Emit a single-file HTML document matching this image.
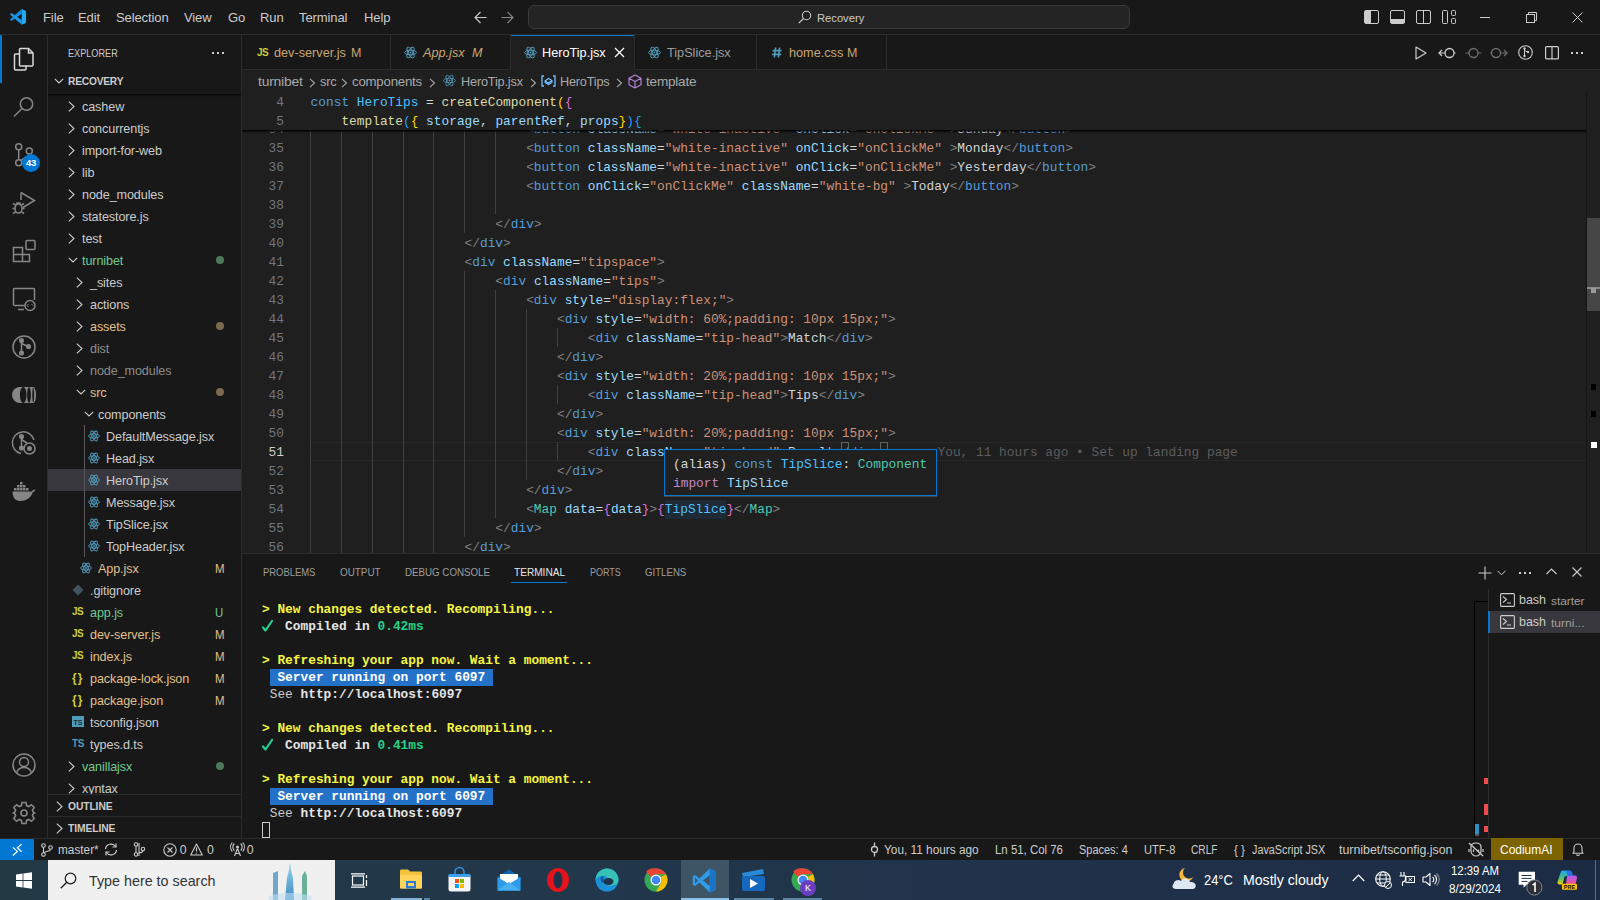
<!DOCTYPE html>
<html><head><meta charset="utf-8">
<style>
*{box-sizing:border-box}
html,body{margin:0;padding:0}
body{width:1600px;height:900px;overflow:hidden;position:relative;background:#181818;font-family:"Liberation Sans",sans-serif;color:#cccccc}
.a{position:absolute}
.mono{font-family:"Liberation Mono",monospace}
svg{position:absolute;overflow:visible}
/* title */
#title{left:0;top:0;width:1600px;height:35px;background:#181818;border-bottom:1px solid #2b2b2b}
.menu{top:10px;font-size:13px;color:#cccccc;letter-spacing:-0.1px}
/* activity */
#act{left:0;top:35px;width:48px;height:803px;background:#181818;border-right:1px solid #2b2b2b}
/* sidebar */
#side{left:48px;top:35px;width:194px;height:803px;background:#181818;border-right:1px solid #2b2b2b}
.row{position:absolute;left:0;width:193px;height:22px;font-size:13.2px;line-height:22px;white-space:nowrap;letter-spacing:-0.1px;transform:scaleX(0.955);transform-origin:0 0;margin-top:0.6px}
/* tabs */
#tabs{left:242px;top:35px;width:1358px;height:35px;background:#181818;border-bottom:1px solid #2b2b2b}
.tab{position:absolute;top:1px;height:35px;border-right:1px solid #2b2b2b;font-size:13px;line-height:35px;white-space:nowrap;letter-spacing:-0.2px}
/* breadcrumbs */
#bc{left:242px;top:70px;width:1358px;height:22px;background:#1f1f1f;font-size:13px;line-height:22px;color:#a9a9a9;white-space:nowrap;letter-spacing:-0.2px}
/* editor */
#ed{left:242px;top:92px;width:1358px;height:461px;background:#1f1f1f;overflow:hidden}
.ln{position:absolute;left:0;margin-top:1px;width:42px;text-align:right;font-family:"Liberation Mono",monospace;font-size:12.83px;line-height:19px;height:19px;color:#6e7681}
.cl{position:absolute;left:68.6px;margin-top:1px;font-family:"Liberation Mono",monospace;font-size:12.83px;line-height:19px;height:19px;white-space:pre;color:#cccccc}
/* panel */
#panel{left:242px;top:553px;width:1358px;height:285px;background:#181818;border-top:1px solid #2b2b2b}
/* status */
#status{left:0;top:838px;width:1600px;height:22px;background:#181818;border-top:1px solid #2b2b2b;font-size:12px;line-height:21px;color:#cccccc;white-space:nowrap}
/* taskbar */
#task{left:0;top:860px;width:1600px;height:40px;background:#1d3140}
/* syntax */
.k{color:#569cd6}.v{color:#4fc1ff}.f{color:#dcdcaa}.p{color:#9cdcfe}.g{color:#808080}.t{color:#569cd6}.at{color:#9cdcfe}.s{color:#ce9178}.c{color:#4ec9b0}.w{color:#d4d4d4}
.b1{color:#ffd700}.b2{color:#da70d6}.b3{color:#179fff}
.hl{background:#1e2a36;display:inline-block;height:19px;vertical-align:top}
</style></head>
<body>
<div id="title" class="a">
<svg style="left:6px;top:5px" width="24" height="24" viewBox="0 0 24 24"><path d="M15.7 4L15.7 8.8L5.6 16L4 14.5Z" fill="#1790e0"/><path d="M5.6 7.9L15.7 15L15.7 19.7L4 9.4Z" fill="#1a98e8"/><path d="M15.7 4L20 6V18L15.7 19.7Z" fill="#25a8f4"/></svg>
<div class="a menu" style="left:43px">File</div>
<div class="a menu" style="left:78px">Edit</div>
<div class="a menu" style="left:116px">Selection</div>
<div class="a menu" style="left:184px">View</div>
<div class="a menu" style="left:228px">Go</div>
<div class="a menu" style="left:260px">Run</div>
<div class="a menu" style="left:299px">Terminal</div>
<div class="a menu" style="left:364px">Help</div>
<svg style="left:474px;top:11px" width="13" height="13" viewBox="0 0 13 13"><path d="M12.5 6.5H1M6.5 1L1 6.5L6.5 12" stroke="#cccccc" stroke-width="1.1" fill="none"/></svg>
<svg style="left:501px;top:11px" width="13" height="13" viewBox="0 0 13 13"><path d="M0.5 6.5H12M6.5 1L12 6.5L6.5 12" stroke="#8a8a8a" stroke-width="1.1" fill="none"/></svg>
<div class="a" style="left:528px;top:5px;width:602px;height:24px;background:#242424;border:1px solid #3a3a3a;border-radius:6px"></div>
<svg style="left:798px;top:10px" width="14" height="14" viewBox="0 0 14 14"><circle cx="8.5" cy="5.5" r="4.2" stroke="#cccccc" stroke-width="1.1" fill="none"/><path d="M5.5 8.5L0.8 13.2" stroke="#cccccc" stroke-width="1.2"/></svg>
<div class="a" style="left:817px;top:11.5px;font-size:11.2px;color:#cccccc">Recovery</div>
<svg style="left:1364px;top:10px" width="15" height="14" viewBox="0 0 15 14"><rect x="0.5" y="0.5" width="14" height="13" rx="1.5" stroke="#cccccc" fill="none"/><rect x="1" y="1" width="6" height="12" fill="#cccccc"/></svg>
<svg style="left:1390px;top:10px" width="15" height="14" viewBox="0 0 15 14"><rect x="0.5" y="0.5" width="14" height="13" rx="1.5" stroke="#cccccc" fill="none"/><rect x="1" y="9" width="13" height="4" fill="#cccccc"/></svg>
<svg style="left:1416px;top:10px" width="15" height="14" viewBox="0 0 15 14"><rect x="0.5" y="0.5" width="14" height="13" rx="1.5" stroke="#cccccc" fill="none"/><path d="M7.5 1V13" stroke="#cccccc"/></svg>
<svg style="left:1442px;top:10px" width="15" height="14" viewBox="0 0 15 14"><rect x="0.5" y="0.5" width="5" height="13" rx="1" stroke="#cccccc" fill="none"/><rect x="9.5" y="0.5" width="4" height="5" rx="1" stroke="#cccccc" fill="none"/><rect x="9.5" y="8.5" width="4" height="5" rx="1" stroke="#cccccc" fill="none"/></svg>
<div class="a" style="left:1480px;top:17px;width:10px;height:1px;background:#cccccc"></div>
<svg style="left:1526px;top:12px" width="11" height="11" viewBox="0 0 11 11"><rect x="0.5" y="2.5" width="8" height="8" stroke="#cccccc" fill="none"/><path d="M2.5 2.5V0.5H10.5V8.5H8.5" stroke="#cccccc" fill="none"/></svg>
<svg style="left:1572px;top:12px" width="11" height="11" viewBox="0 0 11 11"><path d="M0.5 0.5L10.5 10.5M10.5 0.5L0.5 10.5" stroke="#cccccc" stroke-width="1"/></svg>
</div>
<div id="act" class="a">
<div class="a" style="left:0;top:0;width:2px;height:48px;background:#0078d4"></div>
<svg style="left:12px;top:12px" width="24" height="24" viewBox="0 0 24 24" fill="none" stroke="#d7d7d7" stroke-width="1.5"><path d="M7 7H3.5C2.9 7 2.5 7.4 2.5 8V22C2.5 22.6 2.9 23 3.5 23H13C13.6 23 14 22.6 14 22V19"/><path d="M7.5 2.5C7.5 1.9 7.9 1.5 8.5 1.5H16.5L21 6V18C21 18.6 20.6 19 20 19H8.5C7.9 19 7.5 18.6 7.5 18Z"/><path d="M16.5 1.5V6H21"/></svg>
<svg style="left:12px;top:60px" width="24" height="24" viewBox="0 0 24 24" fill="none" stroke="#868686" stroke-width="1.5"><circle cx="14.5" cy="9" r="6.2"/><path d="M10 13.5L2 21.5"/></svg>
<svg style="left:12px;top:108px" width="24" height="24" viewBox="0 0 24 24" fill="none" stroke="#868686" stroke-width="1.5"><circle cx="6.7" cy="3.7" r="3"/><circle cx="17.3" cy="8" r="3"/><circle cx="6.7" cy="19.7" r="3"/><path d="M6.7 6.7V16.7M17.3 11C17.3 14 12 14 8.8 17.5"/></svg>
<div class="a" style="left:22px;top:119px;width:18px;height:18px;border-radius:9px;background:#0078d4;color:#fff;font-size:9.5px;font-weight:bold;line-height:18px;text-align:center;letter-spacing:-0.4px">43</div>
<svg style="left:12px;top:156px" width="24" height="24" viewBox="0 0 24 24" fill="none" stroke="#868686" stroke-width="1.5"><path d="M9 1.5L22.5 9.5L11 16.5"/><path d="M9 1.5V9"/><ellipse cx="6.5" cy="17.5" rx="3.5" ry="4.5"/><path d="M3 17.5H0.5M10 17.5H12.5M3.5 14L1 12.5M9.5 14L12 12.5M3.5 21L1 22.5M9.5 21L12 22.5M4.5 13.5L5 12H8L8.5 13.5"/></svg>
<svg style="left:12px;top:204px" width="24" height="24" viewBox="0 0 24 24" fill="none" stroke="#868686" stroke-width="1.5"><path d="M1.5 8.5H10.5V22.5H1.5ZM1.5 15.5H17.5V22.5H10.5"/><rect x="14" y="1.5" width="9" height="9" rx="1"/></svg>
<svg style="left:12px;top:252px" width="24" height="24" viewBox="0 0 24 24" fill="none" stroke="#868686" stroke-width="1.5"><path d="M13 18.5H2.5C1.9 18.5 1.5 18.1 1.5 17.5V2.5C1.5 1.9 1.9 1.5 2.5 1.5H21.5C22.1 1.5 22.5 1.9 22.5 2.5V13"/><path d="M6 22.5H12"/><circle cx="18" cy="18.5" r="5"/><path d="M16.5 17L15 18.5L16.5 20M19.5 17L21 18.5" stroke-width="1"/></svg>
<svg style="left:12px;top:300px" width="24" height="24" viewBox="0 0 24 24" fill="none" stroke="#868686" stroke-width="1.5"><circle cx="12" cy="12" r="11"/><circle cx="9.5" cy="5.5" r="1.8" fill="#868686"/><circle cx="9.5" cy="18" r="1.8" fill="#868686"/><circle cx="16.5" cy="11.5" r="1.8" fill="#868686"/><path d="M9.5 5.5V18M9.5 8.5L15 11"/></svg>
<svg style="left:12px;top:348px" width="24" height="24" viewBox="0 0 24 24"><path d="M8 4H22C23.5 6 24 9 24 12C24 15 23.5 18 22 20H8A8 8 0 0 1 8 4Z" fill="#868686"/><ellipse cx="11.2" cy="12" rx="3.3" ry="8" fill="#181818"/><ellipse cx="17" cy="12" rx="1.9" ry="7.8" fill="#181818"/><ellipse cx="21.2" cy="12" rx="0.9" ry="7.4" fill="#181818"/></svg>
<svg style="left:12px;top:396px" width="24" height="24" viewBox="0 0 24 24" fill="none" stroke="#868686" stroke-width="1.5"><path d="M22 9A11 11 0 1 0 9 22.6"/><circle cx="9.5" cy="5.5" r="1.8" fill="#868686"/><circle cx="9.5" cy="17" r="1.8" fill="#868686"/><path d="M9.5 5.5V17M9.5 8.5L15 12"/><circle cx="17.5" cy="17.5" r="5.5" stroke-width="1.5"/><circle cx="17.5" cy="17.5" r="2.5" fill="#868686" stroke="none"/></svg>
<svg style="left:12px;top:444px" width="24" height="24" viewBox="0 0 24 24" fill="#868686"><path d="M0.5 12.5H20C20.5 11 21.5 10.3 23.5 10.5C22.8 11.5 22 13 20.5 13.5C19 19 14 22 8 22C3 22 0.5 18 0.5 12.5Z"/><path d="M2 9H4.5V11.5H2ZM5 9H7.5V11.5H5ZM8 9H10.5V11.5H8ZM11 9H13.5V11.5H11ZM14 9H16.5V11.5H14ZM5 6H7.5V8.5H5ZM8 6H10.5V8.5H8ZM11 6H13.5V8.5H11ZM8 3H10.5V5.5H8Z"/></svg>
<svg style="left:12px;top:718px" width="24" height="24" viewBox="0 0 24 24" fill="none" stroke="#868686" stroke-width="1.5"><circle cx="12" cy="12" r="11"/><circle cx="12" cy="9" r="4.5"/><path d="M4.5 19.5C6 16 9 14.5 12 14.5C15 14.5 18 16 19.5 19.5"/></svg>
<svg style="left:12px;top:766px" width="24" height="24" viewBox="0 0 24 24" fill="none" stroke="#868686" stroke-width="1.6"><path d="M10 1.5H14L14.6 4.6L16.8 5.6L19.5 3.8L22.2 6.5L20.4 9.2L21.4 11.4L22.5 12V12L21.4 12.6L20.4 14.8L22.2 17.5L19.5 20.2L16.8 18.4L14.6 19.4L14 22.5H10L9.4 19.4L7.2 18.4L4.5 20.2L1.8 17.5L3.6 14.8L2.6 12.6L1.5 12L2.6 11.4L3.6 9.2L1.8 6.5L4.5 3.8L7.2 5.6L9.4 4.6Z"/><circle cx="12" cy="12" r="3"/></svg>
</div>
<div id="side" class="a">
<div class="a" style="left:20px;top:11px;font-size:11px;color:#cccccc;line-height:14px;transform:scaleX(0.83);transform-origin:0 0">EXPLORER</div>
<div class="a" style="left:164px;top:17px;width:2px;height:2px;background:#cccccc;box-shadow:5px 0 0 #cccccc,10px 0 0 #cccccc"></div>
<svg style="left:6px;top:42px" width="10" height="8" viewBox="0 0 10 8"><path d="M0.8 1.8L5 6L9.2 1.8" stroke="#cccccc" stroke-width="1.1" fill="none"/></svg>
<div class="a" style="left:20px;top:39px;font-size:10.5px;font-weight:bold;letter-spacing:-0.2px;color:#cccccc;line-height:14px;transform:scaleX(0.97);transform-origin:0 0">RECOVERY</div>
<div class="a" style="left:0;top:59px;width:193px;height:3px;background:linear-gradient(#000000aa,#00000000)"></div>
<div class="a" style="left:0;top:60px;width:193px;height:700px;overflow:hidden">
<div class="a" style="left:36px;top:330px;width:1px;height:132px;background:#585858"></div>
<svg style="left:20px;top:6px" width="8" height="11" viewBox="0 0 8 11"><path d="M0.8 0.6L6 5.5L0.8 10.4" stroke="#cccccc" stroke-width="1.1" fill="none"/></svg>
<div class="row" style="left:34px;top:0px;width:auto;color:#cccccc">cashew</div>
<svg style="left:20px;top:28px" width="8" height="11" viewBox="0 0 8 11"><path d="M0.8 0.6L6 5.5L0.8 10.4" stroke="#cccccc" stroke-width="1.1" fill="none"/></svg>
<div class="row" style="left:34px;top:22px;width:auto;color:#cccccc">concurrentjs</div>
<svg style="left:20px;top:50px" width="8" height="11" viewBox="0 0 8 11"><path d="M0.8 0.6L6 5.5L0.8 10.4" stroke="#cccccc" stroke-width="1.1" fill="none"/></svg>
<div class="row" style="left:34px;top:44px;width:auto;color:#cccccc">import-for-web</div>
<svg style="left:20px;top:72px" width="8" height="11" viewBox="0 0 8 11"><path d="M0.8 0.6L6 5.5L0.8 10.4" stroke="#cccccc" stroke-width="1.1" fill="none"/></svg>
<div class="row" style="left:34px;top:66px;width:auto;color:#cccccc">lib</div>
<svg style="left:20px;top:94px" width="8" height="11" viewBox="0 0 8 11"><path d="M0.8 0.6L6 5.5L0.8 10.4" stroke="#cccccc" stroke-width="1.1" fill="none"/></svg>
<div class="row" style="left:34px;top:88px;width:auto;color:#cccccc">node_modules</div>
<svg style="left:20px;top:116px" width="8" height="11" viewBox="0 0 8 11"><path d="M0.8 0.6L6 5.5L0.8 10.4" stroke="#cccccc" stroke-width="1.1" fill="none"/></svg>
<div class="row" style="left:34px;top:110px;width:auto;color:#cccccc">statestore.js</div>
<svg style="left:20px;top:138px" width="8" height="11" viewBox="0 0 8 11"><path d="M0.8 0.6L6 5.5L0.8 10.4" stroke="#cccccc" stroke-width="1.1" fill="none"/></svg>
<div class="row" style="left:34px;top:132px;width:auto;color:#cccccc">test</div>
<svg style="left:20px;top:161px" width="10" height="8" viewBox="0 0 10 8"><path d="M0.8 1.8L5 6L9.2 1.8" stroke="#cccccc" stroke-width="1.1" fill="none"/></svg>
<div class="row" style="left:34px;top:154px;width:auto;color:#73c991">turnibet</div>
<div class="a" style="left:168px;top:161px;width:8px;height:8px;border-radius:4px;background:#4d7a5b"></div>
<svg style="left:28px;top:182px" width="8" height="11" viewBox="0 0 8 11"><path d="M0.8 0.6L6 5.5L0.8 10.4" stroke="#cccccc" stroke-width="1.1" fill="none"/></svg>
<div class="row" style="left:42px;top:176px;width:auto;color:#cccccc">_sites</div>
<svg style="left:28px;top:204px" width="8" height="11" viewBox="0 0 8 11"><path d="M0.8 0.6L6 5.5L0.8 10.4" stroke="#cccccc" stroke-width="1.1" fill="none"/></svg>
<div class="row" style="left:42px;top:198px;width:auto;color:#cccccc">actions</div>
<svg style="left:28px;top:226px" width="8" height="11" viewBox="0 0 8 11"><path d="M0.8 0.6L6 5.5L0.8 10.4" stroke="#cccccc" stroke-width="1.1" fill="none"/></svg>
<div class="row" style="left:42px;top:220px;width:auto;color:#e2c08d">assets</div>
<div class="a" style="left:168px;top:227px;width:8px;height:8px;border-radius:4px;background:#7d6a4e"></div>
<svg style="left:28px;top:248px" width="8" height="11" viewBox="0 0 8 11"><path d="M0.8 0.6L6 5.5L0.8 10.4" stroke="#cccccc" stroke-width="1.1" fill="none"/></svg>
<div class="row" style="left:42px;top:242px;width:auto;color:#8c8c8c">dist</div>
<svg style="left:28px;top:270px" width="8" height="11" viewBox="0 0 8 11"><path d="M0.8 0.6L6 5.5L0.8 10.4" stroke="#cccccc" stroke-width="1.1" fill="none"/></svg>
<div class="row" style="left:42px;top:264px;width:auto;color:#8c8c8c">node_modules</div>
<svg style="left:28px;top:293px" width="10" height="8" viewBox="0 0 10 8"><path d="M0.8 1.8L5 6L9.2 1.8" stroke="#cccccc" stroke-width="1.1" fill="none"/></svg>
<div class="row" style="left:42px;top:286px;width:auto;color:#e2c08d">src</div>
<div class="a" style="left:168px;top:293px;width:8px;height:8px;border-radius:4px;background:#7d6a4e"></div>
<svg style="left:36px;top:315px" width="10" height="8" viewBox="0 0 10 8"><path d="M0.8 1.8L5 6L9.2 1.8" stroke="#cccccc" stroke-width="1.1" fill="none"/></svg>
<div class="row" style="left:50px;top:308px;width:auto;color:#cccccc">components</div>
<svg style="left:40px;top:335px" width="12" height="12" viewBox="0 0 24 24" fill="none" stroke="#519aba" stroke-width="1.8"><ellipse cx="12" cy="12" rx="11" ry="4.2"/><ellipse cx="12" cy="12" rx="11" ry="4.2" transform="rotate(60 12 12)"/><ellipse cx="12" cy="12" rx="11" ry="4.2" transform="rotate(120 12 12)"/><circle cx="12" cy="12" r="1.8" fill="#519aba" stroke="none"/></svg>
<div class="row" style="left:58px;top:330px;width:auto;color:#cccccc">DefaultMessage.jsx</div>
<svg style="left:40px;top:357px" width="12" height="12" viewBox="0 0 24 24" fill="none" stroke="#519aba" stroke-width="1.8"><ellipse cx="12" cy="12" rx="11" ry="4.2"/><ellipse cx="12" cy="12" rx="11" ry="4.2" transform="rotate(60 12 12)"/><ellipse cx="12" cy="12" rx="11" ry="4.2" transform="rotate(120 12 12)"/><circle cx="12" cy="12" r="1.8" fill="#519aba" stroke="none"/></svg>
<div class="row" style="left:58px;top:352px;width:auto;color:#cccccc">Head.jsx</div>
<div class="a" style="left:0;top:374px;width:193px;height:22px;background:#37373d"></div>
<div class="a" style="left:36px;top:374px;width:1px;height:22px;background:#585858"></div>
<svg style="left:40px;top:379px" width="12" height="12" viewBox="0 0 24 24" fill="none" stroke="#519aba" stroke-width="1.8"><ellipse cx="12" cy="12" rx="11" ry="4.2"/><ellipse cx="12" cy="12" rx="11" ry="4.2" transform="rotate(60 12 12)"/><ellipse cx="12" cy="12" rx="11" ry="4.2" transform="rotate(120 12 12)"/><circle cx="12" cy="12" r="1.8" fill="#519aba" stroke="none"/></svg>
<div class="row" style="left:58px;top:374px;width:auto;color:#cccccc">HeroTip.jsx</div>
<svg style="left:40px;top:401px" width="12" height="12" viewBox="0 0 24 24" fill="none" stroke="#519aba" stroke-width="1.8"><ellipse cx="12" cy="12" rx="11" ry="4.2"/><ellipse cx="12" cy="12" rx="11" ry="4.2" transform="rotate(60 12 12)"/><ellipse cx="12" cy="12" rx="11" ry="4.2" transform="rotate(120 12 12)"/><circle cx="12" cy="12" r="1.8" fill="#519aba" stroke="none"/></svg>
<div class="row" style="left:58px;top:396px;width:auto;color:#cccccc">Message.jsx</div>
<svg style="left:40px;top:423px" width="12" height="12" viewBox="0 0 24 24" fill="none" stroke="#519aba" stroke-width="1.8"><ellipse cx="12" cy="12" rx="11" ry="4.2"/><ellipse cx="12" cy="12" rx="11" ry="4.2" transform="rotate(60 12 12)"/><ellipse cx="12" cy="12" rx="11" ry="4.2" transform="rotate(120 12 12)"/><circle cx="12" cy="12" r="1.8" fill="#519aba" stroke="none"/></svg>
<div class="row" style="left:58px;top:418px;width:auto;color:#cccccc">TipSlice.jsx</div>
<svg style="left:40px;top:445px" width="12" height="12" viewBox="0 0 24 24" fill="none" stroke="#519aba" stroke-width="1.8"><ellipse cx="12" cy="12" rx="11" ry="4.2"/><ellipse cx="12" cy="12" rx="11" ry="4.2" transform="rotate(60 12 12)"/><ellipse cx="12" cy="12" rx="11" ry="4.2" transform="rotate(120 12 12)"/><circle cx="12" cy="12" r="1.8" fill="#519aba" stroke="none"/></svg>
<div class="row" style="left:58px;top:440px;width:auto;color:#cccccc">TopHeader.jsx</div>
<svg style="left:32px;top:467px" width="12" height="12" viewBox="0 0 24 24" fill="none" stroke="#519aba" stroke-width="1.8"><ellipse cx="12" cy="12" rx="11" ry="4.2"/><ellipse cx="12" cy="12" rx="11" ry="4.2" transform="rotate(60 12 12)"/><ellipse cx="12" cy="12" rx="11" ry="4.2" transform="rotate(120 12 12)"/><circle cx="12" cy="12" r="1.8" fill="#519aba" stroke="none"/></svg>
<div class="row" style="left:50px;top:462px;width:auto;color:#e2c08d">App.jsx</div>
<div class="row" style="left:167px;top:462px;width:auto;color:#e2c08d;font-size:12px">M</div>
<svg style="left:24px;top:489px" width="12" height="12" viewBox="0 0 12 12"><path d="M6 0.5L11.5 6L6 11.5L0.5 6Z" fill="#41535b"/></svg>
<div class="row" style="left:42px;top:484px;width:auto;color:#cccccc">.gitignore</div>
<div class="a" style="left:24px;top:506px;font-size:10px;font-weight:bold;line-height:22px;color:#cbcb41;letter-spacing:-0.5px">JS</div>
<div class="row" style="left:42px;top:506px;width:auto;color:#73c991">app.js</div>
<div class="row" style="left:167px;top:506px;width:auto;color:#73c991;font-size:12px">U</div>
<div class="a" style="left:24px;top:528px;font-size:10px;font-weight:bold;line-height:22px;color:#cbcb41;letter-spacing:-0.5px">JS</div>
<div class="row" style="left:42px;top:528px;width:auto;color:#e2c08d">dev-server.js</div>
<div class="row" style="left:167px;top:528px;width:auto;color:#e2c08d;font-size:12px">M</div>
<div class="a" style="left:24px;top:550px;font-size:10px;font-weight:bold;line-height:22px;color:#cbcb41;letter-spacing:-0.5px">JS</div>
<div class="row" style="left:42px;top:550px;width:auto;color:#e2c08d">index.js</div>
<div class="row" style="left:167px;top:550px;width:auto;color:#e2c08d;font-size:12px">M</div>
<div class="a" style="left:24px;top:572px;font-size:12px;font-weight:bold;line-height:22px;color:#cbcb41;letter-spacing:1px">{}</div>
<div class="row" style="left:42px;top:572px;width:auto;color:#e2c08d">package-lock.json</div>
<div class="row" style="left:167px;top:572px;width:auto;color:#e2c08d;font-size:12px">M</div>
<div class="a" style="left:24px;top:594px;font-size:12px;font-weight:bold;line-height:22px;color:#cbcb41;letter-spacing:1px">{}</div>
<div class="row" style="left:42px;top:594px;width:auto;color:#e2c08d">package.json</div>
<div class="row" style="left:167px;top:594px;width:auto;color:#e2c08d;font-size:12px">M</div>
<div class="a" style="left:24px;top:621px;width:12px;height:11px;background:#519aba;color:#1a2a33;font-size:7px;font-weight:bold;line-height:13px;text-align:center">TS</div>
<div class="row" style="left:42px;top:616px;width:auto;color:#cccccc">tsconfig.json</div>
<div class="a" style="left:24px;top:638px;font-size:10px;font-weight:bold;line-height:22px;color:#519aba;letter-spacing:-0.3px">TS</div>
<div class="row" style="left:42px;top:638px;width:auto;color:#cccccc">types.d.ts</div>
<svg style="left:20px;top:666px" width="8" height="11" viewBox="0 0 8 11"><path d="M0.8 0.6L6 5.5L0.8 10.4" stroke="#cccccc" stroke-width="1.1" fill="none"/></svg>
<div class="row" style="left:34px;top:660px;width:auto;color:#73c991">vanillajsx</div>
<div class="a" style="left:168px;top:667px;width:8px;height:8px;border-radius:4px;background:#4d7a5b"></div>
<svg style="left:20px;top:688px" width="8" height="11" viewBox="0 0 8 11"><path d="M0.8 0.6L6 5.5L0.8 10.4" stroke="#cccccc" stroke-width="1.1" fill="none"/></svg>
<div class="row" style="left:34px;top:682px;width:auto;color:#cccccc">xyntax</div>
</div>
<div class="a" style="left:0;top:759px;width:193px;height:1px;background:#2b2b2b"></div>
<svg style="left:8px;top:766px" width="8" height="11" viewBox="0 0 8 11"><path d="M0.8 0.6L6 5.5L0.8 10.4" stroke="#cccccc" stroke-width="1.1" fill="none"/></svg>
<div class="a" style="left:20px;top:765px;font-size:10.3px;font-weight:bold;color:#cccccc;line-height:14px;letter-spacing:-0.1px">OUTLINE</div>
<div class="a" style="left:0;top:781px;width:193px;height:1px;background:#2b2b2b"></div>
<svg style="left:8px;top:788px" width="8" height="11" viewBox="0 0 8 11"><path d="M0.8 0.6L6 5.5L0.8 10.4" stroke="#cccccc" stroke-width="1.1" fill="none"/></svg>
<div class="a" style="left:20px;top:787px;font-size:10.3px;font-weight:bold;color:#cccccc;line-height:14px;letter-spacing:-0.1px">TIMELINE</div>
</div>
<div id="tabs" class="a">
<div class="a" style="left:148px;top:0;width:1px;height:34px;background:#2b2b2b"></div>
<div class="a" style="left:268px;top:0;width:124px;height:35px;background:#1f1f1f;border-top:1px solid #0078d4"></div>
<div class="a" style="left:268px;top:0;width:1px;height:35px;background:#2b2b2b"></div>
<div class="a" style="left:392px;top:0;width:1px;height:34px;background:#2b2b2b"></div>
<div class="a" style="left:514px;top:0;width:1px;height:34px;background:#2b2b2b"></div>
<div class="a" style="left:644px;top:0;width:1px;height:34px;background:#2b2b2b"></div>
<div class="a" style="left:15px;top:10px;font-size:10px;font-weight:bold;line-height:16px;color:#cbcb41;letter-spacing:-0.6px">JS</div>
<div class="a" style="left:32px;top:10px;font-size:12.7px;line-height:16px;color:#c6a774;white-space:nowrap;">dev-server.js</div>
<div class="a" style="left:109px;top:10px;font-size:12.5px;line-height:16px;color:#c6a774;white-space:nowrap;">M</div>
<svg style="left:162px;top:11px" width="13" height="13" viewBox="0 0 24 24" fill="none" stroke="#519aba" stroke-width="1.8"><ellipse cx="12" cy="12" rx="11" ry="4.2"/><ellipse cx="12" cy="12" rx="11" ry="4.2" transform="rotate(60 12 12)"/><ellipse cx="12" cy="12" rx="11" ry="4.2" transform="rotate(120 12 12)"/><circle cx="12" cy="12" r="1.8" fill="#519aba" stroke="none"/></svg>
<div class="a" style="left:181px;top:10px;font-size:12.7px;line-height:16px;color:#c6a774;white-space:nowrap;font-style:italic">App.jsx</div>
<div class="a" style="left:230px;top:10px;font-size:12.5px;line-height:16px;color:#c6a774;white-space:nowrap;font-style:italic">M</div>
<svg style="left:282px;top:11px" width="13" height="13" viewBox="0 0 24 24" fill="none" stroke="#519aba" stroke-width="1.8"><ellipse cx="12" cy="12" rx="11" ry="4.2"/><ellipse cx="12" cy="12" rx="11" ry="4.2" transform="rotate(60 12 12)"/><ellipse cx="12" cy="12" rx="11" ry="4.2" transform="rotate(120 12 12)"/><circle cx="12" cy="12" r="1.8" fill="#519aba" stroke="none"/></svg>
<div class="a" style="left:300px;top:10px;font-size:12.7px;line-height:16px;color:#ffffff;white-space:nowrap;">HeroTip.jsx</div>
<svg style="left:372px;top:12px" width="11" height="11" viewBox="0 0 11 11"><path d="M1 1L10 10M10 1L1 10" stroke="#ffffff" stroke-width="1.3"/></svg>
<svg style="left:406px;top:11px" width="13" height="13" viewBox="0 0 24 24" fill="none" stroke="#519aba" stroke-width="1.8"><ellipse cx="12" cy="12" rx="11" ry="4.2"/><ellipse cx="12" cy="12" rx="11" ry="4.2" transform="rotate(60 12 12)"/><ellipse cx="12" cy="12" rx="11" ry="4.2" transform="rotate(120 12 12)"/><circle cx="12" cy="12" r="1.8" fill="#519aba" stroke="none"/></svg>
<div class="a" style="left:425px;top:10px;font-size:12.7px;line-height:16px;color:#9d9d9d;white-space:nowrap;">TipSlice.jsx</div>
<svg style="left:530px;top:11.5px" width="10" height="11" viewBox="0 0 10 11"><path d="M3.6 0.5L2.4 10.5M7.6 0.5L6.4 10.5M0.5 3.6H9.5M0.2 7.4H9.2" stroke="#519aba" stroke-width="1.6"/></svg>
<div class="a" style="left:547px;top:10px;font-size:12.7px;line-height:16px;color:#c6a774;white-space:nowrap;">home.css</div>
<div class="a" style="left:605px;top:10px;font-size:12.5px;line-height:16px;color:#c6a774;white-space:nowrap;">M</div>
<svg style="left:1173px;top:11px" width="12" height="14" viewBox="0 0 12 14"><path d="M1 1L11 7L1 13Z" stroke="#cccccc" stroke-width="1.2" fill="none" stroke-linejoin="round"/></svg>
<svg style="left:1196px;top:12px" width="18" height="12" viewBox="0 0 18 12"><circle cx="11.5" cy="6" r="4.5" stroke="#cccccc" stroke-width="1.3" fill="none"/><path d="M7 6H1M4 3L1 6L4 9" stroke="#cccccc" stroke-width="1.2" fill="none"/><path d="M16 6H17.5" stroke="#cccccc" stroke-width="1.2"/></svg>
<svg style="left:1223px;top:12px" width="17" height="12" viewBox="0 0 17 12"><circle cx="8.5" cy="6" r="4.5" stroke="#6e6e6e" stroke-width="1.3" fill="none"/><path d="M0.5 6H4M13 6H16.5" stroke="#6e6e6e" stroke-width="1.2"/></svg>
<svg style="left:1248px;top:12px" width="18" height="12" viewBox="0 0 18 12"><circle cx="6" cy="6" r="4.5" stroke="#6e6e6e" stroke-width="1.3" fill="none"/><path d="M10.5 6H17M14 3L17 6L14 9" stroke="#6e6e6e" stroke-width="1.2" fill="none"/><path d="M0 6H1.5" stroke="#6e6e6e" stroke-width="1.2"/></svg>
<svg style="left:1276px;top:10px" width="15" height="15" viewBox="0 0 15 15"><circle cx="7.5" cy="7.5" r="6.8" stroke="#cccccc" stroke-width="1.1" fill="none"/><circle cx="6.5" cy="3.5" r="1.2" fill="#cccccc"/><circle cx="6.5" cy="11" r="1.2" fill="#cccccc"/><circle cx="10" cy="7" r="1.2" fill="#cccccc"/><path d="M6.5 3.5V11M6.5 5.5L10 7" stroke="#cccccc" stroke-width="1"/></svg>
<svg style="left:1303px;top:11px" width="14" height="14" viewBox="0 0 14 14"><rect x="0.6" y="0.6" width="12.8" height="12.3" rx="1" stroke="#cccccc" stroke-width="1.2" fill="none"/><path d="M7 1V13" stroke="#cccccc" stroke-width="1.2"/></svg>
<div class="a" style="left:1329px;top:17px;width:2px;height:2px;background:#cccccc;box-shadow:5px 0 0 #cccccc,10px 0 0 #cccccc"></div>
</div>
<div id="bc" class="a">
<div class="a" style="left:15.5px;top:4.8px;font-size:13px;line-height:13px;color:#a9a9a9;white-space:nowrap;transform:scaleX(1.0701);transform-origin:0 0;">turnibet</div>
<svg style="left:67px;top:8px" width="7" height="10" viewBox="0 0 7 10"><path d="M1 0.8L5.5 5L1 9.2" stroke="#a9a9a9" stroke-width="1.1" fill="none"/></svg>
<div class="a" style="left:77.5px;top:4.8px;font-size:13px;line-height:13px;color:#a9a9a9;white-space:nowrap;transform:scaleX(0.9810);transform-origin:0 0;">src</div>
<svg style="left:99px;top:8px" width="7" height="10" viewBox="0 0 7 10"><path d="M1 0.8L5.5 5L1 9.2" stroke="#a9a9a9" stroke-width="1.1" fill="none"/></svg>
<div class="a" style="left:109.5px;top:4.8px;font-size:13px;line-height:13px;color:#a9a9a9;white-space:nowrap;transform:scaleX(1.0166);transform-origin:0 0;">components</div>
<svg style="left:187px;top:8px" width="7" height="10" viewBox="0 0 7 10"><path d="M1 0.8L5.5 5L1 9.2" stroke="#a9a9a9" stroke-width="1.1" fill="none"/></svg>
<svg style="left:201px;top:4px" width="13" height="13" viewBox="0 0 24 24" fill="none" stroke="#519aba" stroke-width="1.5"><ellipse cx="12" cy="12" rx="11" ry="4.2"/><ellipse cx="12" cy="12" rx="11" ry="4.2" transform="rotate(60 12 12)"/><ellipse cx="12" cy="12" rx="11" ry="4.2" transform="rotate(120 12 12)"/><circle cx="12" cy="12" r="1.8" fill="#519aba" stroke="none"/></svg>
<div class="a" style="left:219.0px;top:4.8px;font-size:13px;line-height:13px;color:#a9a9a9;white-space:nowrap;transform:scaleX(0.9808);transform-origin:0 0;">HeroTip.jsx</div>
<svg style="left:288px;top:8px" width="7" height="10" viewBox="0 0 7 10"><path d="M1 0.8L5.5 5L1 9.2" stroke="#a9a9a9" stroke-width="1.1" fill="none"/></svg>
<svg style="left:299px;top:5px" width="15" height="12" viewBox="0 0 15 12"><path d="M3 1H1V11H3M12 1H14V11H12" stroke="#75beff" stroke-width="1.3" fill="none"/><path d="M4 6L7.5 3.5L11 5.5V7.5L7.5 9.5L4 7.5Z M4 6L7.5 8L11 5.5 M7.5 8V9.5" stroke="#75beff" stroke-width="1.1" fill="none"/></svg>
<div class="a" style="left:317.5px;top:4.8px;font-size:13px;line-height:13px;color:#a9a9a9;white-space:nowrap;transform:scaleX(0.9760);transform-origin:0 0;">HeroTips</div>
<svg style="left:374px;top:8px" width="7" height="10" viewBox="0 0 7 10"><path d="M1 0.8L5.5 5L1 9.2" stroke="#a9a9a9" stroke-width="1.1" fill="none"/></svg>
<svg style="left:386px;top:4px" width="14" height="15" viewBox="0 0 14 15"><path d="M7 1L13 4.3V10.7L7 14L1 10.7V4.3Z M1 4.3L7 7.5L13 4.3 M7 7.5V14" stroke="#b180d7" stroke-width="1.2" fill="none" stroke-linejoin="round"/></svg>
<div class="a" style="left:403.5px;top:4.8px;font-size:13px;line-height:13px;color:#a9a9a9;white-space:nowrap;transform:scaleX(1.0429);transform-origin:0 0;">template</div>
</div>
<div id="ed" class="a">
<div class="a" style="left:68px;top:350px;width:1276px;height:19px;border-top:1px solid #282828;border-bottom:1px solid #282828"></div>
<div class="a" style="left:68.1px;top:27px;width:1px;height:19px;background:#404040"></div>
<div class="a" style="left:98.9px;top:27px;width:1px;height:19px;background:#404040"></div>
<div class="a" style="left:129.7px;top:27px;width:1px;height:19px;background:#404040"></div>
<div class="a" style="left:160.5px;top:27px;width:1px;height:19px;background:#404040"></div>
<div class="a" style="left:191.3px;top:27px;width:1px;height:19px;background:#404040"></div>
<div class="a" style="left:222.1px;top:27px;width:1px;height:19px;background:#404040"></div>
<div class="a" style="left:252.9px;top:27px;width:1px;height:19px;background:#404040"></div>
<div class="a" style="left:68.1px;top:46px;width:1px;height:19px;background:#404040"></div>
<div class="a" style="left:98.9px;top:46px;width:1px;height:19px;background:#404040"></div>
<div class="a" style="left:129.7px;top:46px;width:1px;height:19px;background:#404040"></div>
<div class="a" style="left:160.5px;top:46px;width:1px;height:19px;background:#404040"></div>
<div class="a" style="left:191.3px;top:46px;width:1px;height:19px;background:#404040"></div>
<div class="a" style="left:222.1px;top:46px;width:1px;height:19px;background:#404040"></div>
<div class="a" style="left:252.9px;top:46px;width:1px;height:19px;background:#404040"></div>
<div class="a" style="left:68.1px;top:65px;width:1px;height:19px;background:#404040"></div>
<div class="a" style="left:98.9px;top:65px;width:1px;height:19px;background:#404040"></div>
<div class="a" style="left:129.7px;top:65px;width:1px;height:19px;background:#404040"></div>
<div class="a" style="left:160.5px;top:65px;width:1px;height:19px;background:#404040"></div>
<div class="a" style="left:191.3px;top:65px;width:1px;height:19px;background:#404040"></div>
<div class="a" style="left:222.1px;top:65px;width:1px;height:19px;background:#404040"></div>
<div class="a" style="left:252.9px;top:65px;width:1px;height:19px;background:#404040"></div>
<div class="a" style="left:68.1px;top:84px;width:1px;height:19px;background:#404040"></div>
<div class="a" style="left:98.9px;top:84px;width:1px;height:19px;background:#404040"></div>
<div class="a" style="left:129.7px;top:84px;width:1px;height:19px;background:#404040"></div>
<div class="a" style="left:160.5px;top:84px;width:1px;height:19px;background:#404040"></div>
<div class="a" style="left:191.3px;top:84px;width:1px;height:19px;background:#404040"></div>
<div class="a" style="left:222.1px;top:84px;width:1px;height:19px;background:#404040"></div>
<div class="a" style="left:252.9px;top:84px;width:1px;height:19px;background:#404040"></div>
<div class="a" style="left:68.1px;top:103px;width:1px;height:19px;background:#404040"></div>
<div class="a" style="left:98.9px;top:103px;width:1px;height:19px;background:#404040"></div>
<div class="a" style="left:129.7px;top:103px;width:1px;height:19px;background:#404040"></div>
<div class="a" style="left:160.5px;top:103px;width:1px;height:19px;background:#404040"></div>
<div class="a" style="left:191.3px;top:103px;width:1px;height:19px;background:#404040"></div>
<div class="a" style="left:222.1px;top:103px;width:1px;height:19px;background:#404040"></div>
<div class="a" style="left:252.9px;top:103px;width:1px;height:19px;background:#404040"></div>
<div class="a" style="left:68.1px;top:122px;width:1px;height:19px;background:#404040"></div>
<div class="a" style="left:98.9px;top:122px;width:1px;height:19px;background:#404040"></div>
<div class="a" style="left:129.7px;top:122px;width:1px;height:19px;background:#404040"></div>
<div class="a" style="left:160.5px;top:122px;width:1px;height:19px;background:#404040"></div>
<div class="a" style="left:191.3px;top:122px;width:1px;height:19px;background:#404040"></div>
<div class="a" style="left:222.1px;top:122px;width:1px;height:19px;background:#404040"></div>
<div class="a" style="left:68.1px;top:141px;width:1px;height:19px;background:#404040"></div>
<div class="a" style="left:98.9px;top:141px;width:1px;height:19px;background:#404040"></div>
<div class="a" style="left:129.7px;top:141px;width:1px;height:19px;background:#404040"></div>
<div class="a" style="left:160.5px;top:141px;width:1px;height:19px;background:#404040"></div>
<div class="a" style="left:191.3px;top:141px;width:1px;height:19px;background:#404040"></div>
<div class="a" style="left:68.1px;top:160px;width:1px;height:19px;background:#404040"></div>
<div class="a" style="left:98.9px;top:160px;width:1px;height:19px;background:#404040"></div>
<div class="a" style="left:129.7px;top:160px;width:1px;height:19px;background:#404040"></div>
<div class="a" style="left:160.5px;top:160px;width:1px;height:19px;background:#404040"></div>
<div class="a" style="left:191.3px;top:160px;width:1px;height:19px;background:#404040"></div>
<div class="a" style="left:68.1px;top:179px;width:1px;height:19px;background:#404040"></div>
<div class="a" style="left:98.9px;top:179px;width:1px;height:19px;background:#404040"></div>
<div class="a" style="left:129.7px;top:179px;width:1px;height:19px;background:#404040"></div>
<div class="a" style="left:160.5px;top:179px;width:1px;height:19px;background:#404040"></div>
<div class="a" style="left:191.3px;top:179px;width:1px;height:19px;background:#404040"></div>
<div class="a" style="left:222.1px;top:179px;width:1px;height:19px;background:#404040"></div>
<div class="a" style="left:68.1px;top:198px;width:1px;height:19px;background:#404040"></div>
<div class="a" style="left:98.9px;top:198px;width:1px;height:19px;background:#404040"></div>
<div class="a" style="left:129.7px;top:198px;width:1px;height:19px;background:#404040"></div>
<div class="a" style="left:160.5px;top:198px;width:1px;height:19px;background:#404040"></div>
<div class="a" style="left:191.3px;top:198px;width:1px;height:19px;background:#404040"></div>
<div class="a" style="left:222.1px;top:198px;width:1px;height:19px;background:#404040"></div>
<div class="a" style="left:252.9px;top:198px;width:1px;height:19px;background:#404040"></div>
<div class="a" style="left:68.1px;top:217px;width:1px;height:19px;background:#404040"></div>
<div class="a" style="left:98.9px;top:217px;width:1px;height:19px;background:#404040"></div>
<div class="a" style="left:129.7px;top:217px;width:1px;height:19px;background:#404040"></div>
<div class="a" style="left:160.5px;top:217px;width:1px;height:19px;background:#404040"></div>
<div class="a" style="left:191.3px;top:217px;width:1px;height:19px;background:#404040"></div>
<div class="a" style="left:222.1px;top:217px;width:1px;height:19px;background:#404040"></div>
<div class="a" style="left:252.9px;top:217px;width:1px;height:19px;background:#404040"></div>
<div class="a" style="left:283.7px;top:217px;width:1px;height:19px;background:#404040"></div>
<div class="a" style="left:68.1px;top:236px;width:1px;height:19px;background:#404040"></div>
<div class="a" style="left:98.9px;top:236px;width:1px;height:19px;background:#404040"></div>
<div class="a" style="left:129.7px;top:236px;width:1px;height:19px;background:#404040"></div>
<div class="a" style="left:160.5px;top:236px;width:1px;height:19px;background:#404040"></div>
<div class="a" style="left:191.3px;top:236px;width:1px;height:19px;background:#404040"></div>
<div class="a" style="left:222.1px;top:236px;width:1px;height:19px;background:#404040"></div>
<div class="a" style="left:252.9px;top:236px;width:1px;height:19px;background:#404040"></div>
<div class="a" style="left:283.7px;top:236px;width:1px;height:19px;background:#404040"></div>
<div class="a" style="left:314.5px;top:236px;width:1px;height:19px;background:#404040"></div>
<div class="a" style="left:68.1px;top:255px;width:1px;height:19px;background:#404040"></div>
<div class="a" style="left:98.9px;top:255px;width:1px;height:19px;background:#404040"></div>
<div class="a" style="left:129.7px;top:255px;width:1px;height:19px;background:#404040"></div>
<div class="a" style="left:160.5px;top:255px;width:1px;height:19px;background:#404040"></div>
<div class="a" style="left:191.3px;top:255px;width:1px;height:19px;background:#404040"></div>
<div class="a" style="left:222.1px;top:255px;width:1px;height:19px;background:#404040"></div>
<div class="a" style="left:252.9px;top:255px;width:1px;height:19px;background:#404040"></div>
<div class="a" style="left:283.7px;top:255px;width:1px;height:19px;background:#404040"></div>
<div class="a" style="left:68.1px;top:274px;width:1px;height:19px;background:#404040"></div>
<div class="a" style="left:98.9px;top:274px;width:1px;height:19px;background:#404040"></div>
<div class="a" style="left:129.7px;top:274px;width:1px;height:19px;background:#404040"></div>
<div class="a" style="left:160.5px;top:274px;width:1px;height:19px;background:#404040"></div>
<div class="a" style="left:191.3px;top:274px;width:1px;height:19px;background:#404040"></div>
<div class="a" style="left:222.1px;top:274px;width:1px;height:19px;background:#404040"></div>
<div class="a" style="left:252.9px;top:274px;width:1px;height:19px;background:#404040"></div>
<div class="a" style="left:283.7px;top:274px;width:1px;height:19px;background:#404040"></div>
<div class="a" style="left:68.1px;top:293px;width:1px;height:19px;background:#404040"></div>
<div class="a" style="left:98.9px;top:293px;width:1px;height:19px;background:#404040"></div>
<div class="a" style="left:129.7px;top:293px;width:1px;height:19px;background:#404040"></div>
<div class="a" style="left:160.5px;top:293px;width:1px;height:19px;background:#404040"></div>
<div class="a" style="left:191.3px;top:293px;width:1px;height:19px;background:#404040"></div>
<div class="a" style="left:222.1px;top:293px;width:1px;height:19px;background:#404040"></div>
<div class="a" style="left:252.9px;top:293px;width:1px;height:19px;background:#404040"></div>
<div class="a" style="left:283.7px;top:293px;width:1px;height:19px;background:#404040"></div>
<div class="a" style="left:314.5px;top:293px;width:1px;height:19px;background:#404040"></div>
<div class="a" style="left:68.1px;top:312px;width:1px;height:19px;background:#404040"></div>
<div class="a" style="left:98.9px;top:312px;width:1px;height:19px;background:#404040"></div>
<div class="a" style="left:129.7px;top:312px;width:1px;height:19px;background:#404040"></div>
<div class="a" style="left:160.5px;top:312px;width:1px;height:19px;background:#404040"></div>
<div class="a" style="left:191.3px;top:312px;width:1px;height:19px;background:#404040"></div>
<div class="a" style="left:222.1px;top:312px;width:1px;height:19px;background:#404040"></div>
<div class="a" style="left:252.9px;top:312px;width:1px;height:19px;background:#404040"></div>
<div class="a" style="left:283.7px;top:312px;width:1px;height:19px;background:#404040"></div>
<div class="a" style="left:68.1px;top:331px;width:1px;height:19px;background:#404040"></div>
<div class="a" style="left:98.9px;top:331px;width:1px;height:19px;background:#404040"></div>
<div class="a" style="left:129.7px;top:331px;width:1px;height:19px;background:#404040"></div>
<div class="a" style="left:160.5px;top:331px;width:1px;height:19px;background:#404040"></div>
<div class="a" style="left:191.3px;top:331px;width:1px;height:19px;background:#404040"></div>
<div class="a" style="left:222.1px;top:331px;width:1px;height:19px;background:#404040"></div>
<div class="a" style="left:252.9px;top:331px;width:1px;height:19px;background:#404040"></div>
<div class="a" style="left:283.7px;top:331px;width:1px;height:19px;background:#404040"></div>
<div class="a" style="left:68.1px;top:350px;width:1px;height:19px;background:#404040"></div>
<div class="a" style="left:98.9px;top:350px;width:1px;height:19px;background:#404040"></div>
<div class="a" style="left:129.7px;top:350px;width:1px;height:19px;background:#404040"></div>
<div class="a" style="left:160.5px;top:350px;width:1px;height:19px;background:#404040"></div>
<div class="a" style="left:191.3px;top:350px;width:1px;height:19px;background:#404040"></div>
<div class="a" style="left:222.1px;top:350px;width:1px;height:19px;background:#404040"></div>
<div class="a" style="left:252.9px;top:350px;width:1px;height:19px;background:#404040"></div>
<div class="a" style="left:283.7px;top:350px;width:1px;height:19px;background:#404040"></div>
<div class="a" style="left:314.5px;top:350px;width:1px;height:19px;background:#404040"></div>
<div class="a" style="left:68.1px;top:369px;width:1px;height:19px;background:#404040"></div>
<div class="a" style="left:98.9px;top:369px;width:1px;height:19px;background:#404040"></div>
<div class="a" style="left:129.7px;top:369px;width:1px;height:19px;background:#404040"></div>
<div class="a" style="left:160.5px;top:369px;width:1px;height:19px;background:#404040"></div>
<div class="a" style="left:191.3px;top:369px;width:1px;height:19px;background:#404040"></div>
<div class="a" style="left:222.1px;top:369px;width:1px;height:19px;background:#404040"></div>
<div class="a" style="left:252.9px;top:369px;width:1px;height:19px;background:#404040"></div>
<div class="a" style="left:283.7px;top:369px;width:1px;height:19px;background:#404040"></div>
<div class="a" style="left:68.1px;top:388px;width:1px;height:19px;background:#404040"></div>
<div class="a" style="left:98.9px;top:388px;width:1px;height:19px;background:#404040"></div>
<div class="a" style="left:129.7px;top:388px;width:1px;height:19px;background:#404040"></div>
<div class="a" style="left:160.5px;top:388px;width:1px;height:19px;background:#404040"></div>
<div class="a" style="left:191.3px;top:388px;width:1px;height:19px;background:#404040"></div>
<div class="a" style="left:222.1px;top:388px;width:1px;height:19px;background:#404040"></div>
<div class="a" style="left:252.9px;top:388px;width:1px;height:19px;background:#404040"></div>
<div class="a" style="left:68.1px;top:407px;width:1px;height:19px;background:#404040"></div>
<div class="a" style="left:98.9px;top:407px;width:1px;height:19px;background:#404040"></div>
<div class="a" style="left:129.7px;top:407px;width:1px;height:19px;background:#404040"></div>
<div class="a" style="left:160.5px;top:407px;width:1px;height:19px;background:#404040"></div>
<div class="a" style="left:191.3px;top:407px;width:1px;height:19px;background:#404040"></div>
<div class="a" style="left:222.1px;top:407px;width:1px;height:19px;background:#404040"></div>
<div class="a" style="left:252.9px;top:407px;width:1px;height:19px;background:#404040"></div>
<div class="a" style="left:68.1px;top:426px;width:1px;height:19px;background:#404040"></div>
<div class="a" style="left:98.9px;top:426px;width:1px;height:19px;background:#404040"></div>
<div class="a" style="left:129.7px;top:426px;width:1px;height:19px;background:#404040"></div>
<div class="a" style="left:160.5px;top:426px;width:1px;height:19px;background:#404040"></div>
<div class="a" style="left:191.3px;top:426px;width:1px;height:19px;background:#404040"></div>
<div class="a" style="left:222.1px;top:426px;width:1px;height:19px;background:#404040"></div>
<div class="a" style="left:68.1px;top:445px;width:1px;height:19px;background:#404040"></div>
<div class="a" style="left:98.9px;top:445px;width:1px;height:19px;background:#404040"></div>
<div class="a" style="left:129.7px;top:445px;width:1px;height:19px;background:#404040"></div>
<div class="a" style="left:160.5px;top:445px;width:1px;height:19px;background:#404040"></div>
<div class="a" style="left:191.3px;top:445px;width:1px;height:19px;background:#404040"></div>
<div class="ln" style="top:27px;color:#6e7681">34</div>
<div class="cl" style="top:27px">                            <span class="g">&lt;</span><span class="t">button</span> <span class="at">className</span><span class="w">=</span><span class="s">"white-inactive"</span> <span class="at">onClick</span><span class="w">=</span><span class="s">"onClickMe"</span> <span class="g">&gt;</span><span class="w">Sunday</span><span class="g">&lt;/</span><span class="t">button</span><span class="g">&gt;</span></div>
<div class="ln" style="top:46px;color:#6e7681">35</div>
<div class="cl" style="top:46px">                            <span class="g">&lt;</span><span class="t">button</span> <span class="at">className</span><span class="w">=</span><span class="s">"white-inactive"</span> <span class="at">onClick</span><span class="w">=</span><span class="s">"onClickMe"</span> <span class="g">&gt;</span><span class="w">Monday</span><span class="g">&lt;/</span><span class="t">button</span><span class="g">&gt;</span></div>
<div class="ln" style="top:65px;color:#6e7681">36</div>
<div class="cl" style="top:65px">                            <span class="g">&lt;</span><span class="t">button</span> <span class="at">className</span><span class="w">=</span><span class="s">"white-inactive"</span> <span class="at">onClick</span><span class="w">=</span><span class="s">"onClickMe"</span> <span class="g">&gt;</span><span class="w">Yesterday</span><span class="g">&lt;/</span><span class="t">button</span><span class="g">&gt;</span></div>
<div class="ln" style="top:84px;color:#6e7681">37</div>
<div class="cl" style="top:84px">                            <span class="g">&lt;</span><span class="t">button</span> <span class="at">onClick</span><span class="w">=</span><span class="s">"onClickMe"</span> <span class="at">className</span><span class="w">=</span><span class="s">"white-bg"</span> <span class="g">&gt;</span><span class="w">Today</span><span class="g">&lt;/</span><span class="t">button</span><span class="g">&gt;</span></div>
<div class="ln" style="top:103px;color:#6e7681">38</div>
<div class="cl" style="top:103px"></div>
<div class="ln" style="top:122px;color:#6e7681">39</div>
<div class="cl" style="top:122px">                        <span class="g">&lt;/</span><span class="t">div</span><span class="g">&gt;</span></div>
<div class="ln" style="top:141px;color:#6e7681">40</div>
<div class="cl" style="top:141px">                    <span class="g">&lt;/</span><span class="t">div</span><span class="g">&gt;</span></div>
<div class="ln" style="top:160px;color:#6e7681">41</div>
<div class="cl" style="top:160px">                    <span class="g">&lt;</span><span class="t">div</span> <span class="at">className</span><span class="w">=</span><span class="s">"tipspace"</span><span class="g">&gt;</span></div>
<div class="ln" style="top:179px;color:#6e7681">42</div>
<div class="cl" style="top:179px">                        <span class="g">&lt;</span><span class="t">div</span> <span class="at">className</span><span class="w">=</span><span class="s">"tips"</span><span class="g">&gt;</span></div>
<div class="ln" style="top:198px;color:#6e7681">43</div>
<div class="cl" style="top:198px">                            <span class="g">&lt;</span><span class="t">div</span> <span class="at">style</span><span class="w">=</span><span class="s">"display:flex;"</span><span class="g">&gt;</span></div>
<div class="ln" style="top:217px;color:#6e7681">44</div>
<div class="cl" style="top:217px">                                <span class="g">&lt;</span><span class="t">div</span> <span class="at">style</span><span class="w">=</span><span class="s">"width: 60%;padding: 10px 15px;"</span><span class="g">&gt;</span></div>
<div class="ln" style="top:236px;color:#6e7681">45</div>
<div class="cl" style="top:236px">                                    <span class="g">&lt;</span><span class="t">div</span> <span class="at">className</span><span class="w">=</span><span class="s">"tip-head"</span><span class="g">&gt;</span><span class="w">Match</span><span class="g">&lt;/</span><span class="t">div</span><span class="g">&gt;</span></div>
<div class="ln" style="top:255px;color:#6e7681">46</div>
<div class="cl" style="top:255px">                                <span class="g">&lt;/</span><span class="t">div</span><span class="g">&gt;</span></div>
<div class="ln" style="top:274px;color:#6e7681">47</div>
<div class="cl" style="top:274px">                                <span class="g">&lt;</span><span class="t">div</span> <span class="at">style</span><span class="w">=</span><span class="s">"width: 20%;padding: 10px 15px;"</span><span class="g">&gt;</span></div>
<div class="ln" style="top:293px;color:#6e7681">48</div>
<div class="cl" style="top:293px">                                    <span class="g">&lt;</span><span class="t">div</span> <span class="at">className</span><span class="w">=</span><span class="s">"tip-head"</span><span class="g">&gt;</span><span class="w">Tips</span><span class="g">&lt;/</span><span class="t">div</span><span class="g">&gt;</span></div>
<div class="ln" style="top:312px;color:#6e7681">49</div>
<div class="cl" style="top:312px">                                <span class="g">&lt;/</span><span class="t">div</span><span class="g">&gt;</span></div>
<div class="ln" style="top:331px;color:#6e7681">50</div>
<div class="cl" style="top:331px">                                <span class="g">&lt;</span><span class="t">div</span> <span class="at">style</span><span class="w">=</span><span class="s">"width: 20%;padding: 10px 15px;"</span><span class="g">&gt;</span></div>
<div class="ln" style="top:350px;color:#cccccc">51</div>
<div class="cl" style="top:350px">                                    <span class="g">&lt;</span><span class="t">div</span> <span class="at">className</span><span class="w">=</span><span class="s">"tip-head"</span><span class="g">&gt;</span><span class="w">Result</span><span class="g">&lt;/</span><span class="t">div</span><span class="g">&gt;</span></div>
<div class="ln" style="top:369px;color:#6e7681">52</div>
<div class="cl" style="top:369px">                                <span class="g">&lt;/</span><span class="t">div</span><span class="g">&gt;</span></div>
<div class="ln" style="top:388px;color:#6e7681">53</div>
<div class="cl" style="top:388px">                            <span class="g">&lt;/</span><span class="t">div</span><span class="g">&gt;</span></div>
<div class="ln" style="top:407px;color:#6e7681">54</div>
<div class="cl" style="top:407px">                            <span class="g">&lt;</span><span class="c">Map</span> <span class="at">data</span><span class="w">=</span><span class="b2">{</span><span class="p">data</span><span class="b2">}</span><span class="g">&gt;</span><span class="b2">{</span><span class="v hl">TipSlice</span><span class="b2">}</span><span class="g">&lt;/</span><span class="c">Map</span><span class="g">&gt;</span></div>
<div class="ln" style="top:426px;color:#6e7681">55</div>
<div class="cl" style="top:426px">                        <span class="g">&lt;/</span><span class="t">div</span><span class="g">&gt;</span></div>
<div class="ln" style="top:445px;color:#6e7681">56</div>
<div class="cl" style="top:445px">                    <span class="g">&lt;/</span><span class="t">div</span><span class="g">&gt;</span></div>
<div class="cl" style="top:350px;left:695.5px;color:#5c5c5c">You, 11 hours ago • Set up landing page</div>
<div class="a" style="left:0;top:0;width:1344px;height:38px;background:#1f1f1f"></div>
<div class="a" style="left:0;top:38px;width:1344px;height:3px;background:linear-gradient(#000000,#00000000)"></div>
<div class="ln" style="top:0px">4</div>
<div class="cl" style="top:0px"><span class="k">const</span> <span class="v">HeroTips</span> <span class="w">=</span> <span class="f">createComponent</span><span class="b1">(</span><span class="b2">{</span></div>
<div class="ln" style="top:19px">5</div>
<div class="cl" style="top:19px">    <span class="f">template</span><span class="b3">(</span><span class="b1">{</span> <span class="p">storage</span><span class="w">,</span> <span class="p">parentRef</span><span class="w">,</span> <span class="p">props</span><span class="b1">}</span><span class="b3">)</span><span class="b3">{</span></div>
<div class="a" style="left:1344px;top:0;width:1px;height:461px;background:#151515"></div>
<div class="a" style="left:1345px;top:126px;width:13px;height:93px;background:#464646"></div>
<div class="a" style="left:1345px;top:195px;width:13px;height:2px;background:#8a8a8a"></div>
<div class="a" style="left:1349px;top:196px;width:5px;height:5px;background:#9a9a9a"></div>
<div class="a" style="left:1349px;top:292px;width:5px;height:6px;background:#000"></div>
<div class="a" style="left:1349px;top:319px;width:5px;height:6px;background:#000"></div>
<div class="a" style="left:1349px;top:350px;width:6px;height:6px;background:#fff"></div>
<div class="a" style="left:599px;top:350px;width:8px;height:8px;border:1px solid #5a6a5a"></div>
<div class="a" style="left:638px;top:350px;width:8px;height:8px;border:1px solid #5a6a5a"></div>
<div class="a" style="left:422px;top:357px;width:273px;height:47px;background:#202020;border:1px solid #0078d4;box-shadow:0 1px 0 #454545"></div>
<div class="cl" style="left:431px;top:362px"><span class="w">(alias)</span> <span class="k">const</span> <span class="v">TipSlice</span><span class="w">:</span> <span class="c">Component</span></div>
<div class="cl" style="left:431px;top:381px"><span style="color:#c586c0">import</span> <span class="p">TipSlice</span></div>
</div>
<div id="panel" class="a">
<div class="a" style="left:20.6px;top:13.1px;font-size:11.5px;line-height:11.5px;color:#9d9d9d;white-space:nowrap;transform:scaleX(0.8199);transform-origin:0 0;">PROBLEMS</div>
<div class="a" style="left:98.0px;top:13.1px;font-size:11.5px;line-height:11.5px;color:#9d9d9d;white-space:nowrap;transform:scaleX(0.8588);transform-origin:0 0;">OUTPUT</div>
<div class="a" style="left:163.0px;top:13.1px;font-size:11.5px;line-height:11.5px;color:#9d9d9d;white-space:nowrap;transform:scaleX(0.8472);transform-origin:0 0;">DEBUG CONSOLE</div>
<div class="a" style="left:272.0px;top:13.1px;font-size:11.5px;line-height:11.5px;color:#e7e7e7;white-space:nowrap;transform:scaleX(0.8771);transform-origin:0 0;">TERMINAL</div>
<div class="a" style="left:348.0px;top:13.1px;font-size:11.5px;line-height:11.5px;color:#9d9d9d;white-space:nowrap;transform:scaleX(0.7815);transform-origin:0 0;">PORTS</div>
<div class="a" style="left:402.7px;top:13.1px;font-size:11.5px;line-height:11.5px;color:#9d9d9d;white-space:nowrap;transform:scaleX(0.8393);transform-origin:0 0;">GITLENS</div>
<div class="a" style="left:269px;top:28px;width:56px;height:1px;background:#0078d4"></div>
<svg style="left:1236px;top:12px" width="14" height="14" viewBox="0 0 14 14"><path d="M7 0.5V13.5M0.5 7H13.5" stroke="#cccccc" stroke-width="1.1"/></svg>
<svg style="left:1255px;top:16px" width="9" height="6" viewBox="0 0 9 6"><path d="M0.5 0.8L4.5 4.8L8.5 0.8" stroke="#cccccc" stroke-width="1" fill="none"/></svg>
<div class="a" style="left:1277px;top:18px;width:2px;height:2px;background:#cccccc;box-shadow:5px 0 0 #cccccc,10px 0 0 #cccccc"></div>
<svg style="left:1304px;top:14px" width="11" height="7" viewBox="0 0 11 7"><path d="M0.5 6L5.5 1L10.5 6" stroke="#cccccc" stroke-width="1.1" fill="none"/></svg>
<svg style="left:1330px;top:13px" width="10" height="10" viewBox="0 0 10 10"><path d="M0.5 0.5L9.5 9.5M9.5 0.5L0.5 9.5" stroke="#cccccc" stroke-width="1.1"/></svg>
<div class="a" style="left:1246px;top:35px;width:1px;height:250px;background:#2b2b2b"></div>
<div class="a" style="left:1247px;top:57px;width:111px;height:22px;background:#37373d"></div>
<div class="a" style="left:1246px;top:57px;width:2px;height:22px;background:#0078d4"></div>
<svg style="left:1257.5px;top:39px" width="15" height="14" viewBox="0 0 15 14"><rect x="0.6" y="0.6" width="13.8" height="12.8" rx="1" stroke="#cccccc" stroke-width="1.1" fill="none"/><path d="M3 3.5L6.5 6.5L3 9.5M7 10H11" stroke="#cccccc" stroke-width="1.1" fill="none"/></svg>
<div class="a" style="left:1276.5px;top:40.2px;font-size:12.8px;line-height:12.8px;color:#cccccc;white-space:nowrap;transform:scaleX(0.9727);transform-origin:0 0;">bash</div>
<div class="a" style="left:1309.0px;top:41.5px;font-size:11.2px;line-height:11.2px;color:#a0a0a0;white-space:nowrap;transform:scaleX(1.0586);transform-origin:0 0;">starter</div>
<svg style="left:1257.5px;top:61px" width="15" height="14" viewBox="0 0 15 14"><rect x="0.6" y="0.6" width="13.8" height="12.8" rx="1" stroke="#cccccc" stroke-width="1.1" fill="none"/><path d="M3 3.5L6.5 6.5L3 9.5M7 10H11" stroke="#cccccc" stroke-width="1.1" fill="none"/></svg>
<div class="a" style="left:1276.5px;top:62.2px;font-size:12.8px;line-height:12.8px;color:#cccccc;white-space:nowrap;transform:scaleX(0.9727);transform-origin:0 0;">bash</div>
<div class="a" style="left:1309.0px;top:63.5px;font-size:11.2px;line-height:11.2px;color:#a0a0a0;white-space:nowrap;transform:scaleX(1.0796);transform-origin:0 0;">turni...</div>
<div class="a" style="left:1232px;top:47px;width:14px;height:1px;background:#000"></div>
<div class="a" style="left:1232px;top:47px;width:1px;height:238px;background:#000"></div>
<div class="a" style="left:1242px;top:224px;width:4px;height:6px;background:#f14c4c"></div>
<div class="a" style="left:1242px;top:250px;width:4px;height:11px;background:#f14c4c"></div>
<div class="a" style="left:1242px;top:272px;width:4px;height:6px;background:#f14c4c"></div>
<div class="a" style="left:1233px;top:270px;width:4px;height:10px;background:#2f8fc7"></div>
<div class="a" style="left:1233px;top:280px;width:4px;height:2px;background:#555"></div>
<div class="a mono" style="left:20px;top:47px;font-size:12.83px;line-height:17px;height:17px;white-space:pre;font-weight:bold;color:#e5e5e5"><span style="color:#f5f543">&gt; New changes detected. Recompiling...</span></div>
<div class="a mono" style="left:20px;top:64px;font-size:12.83px;line-height:17px;height:17px;white-space:pre;font-weight:bold;color:#e5e5e5">   Compiled in <span style="color:#23d18b">0.42ms</span></div>
<div class="a mono" style="left:20px;top:98px;font-size:12.83px;line-height:17px;height:17px;white-space:pre;font-weight:bold;color:#e5e5e5"><span style="color:#f5f543">&gt; Refreshing your app now. Wait a moment...</span></div>
<div class="a mono" style="left:20px;top:115px;font-size:12.83px;line-height:17px;height:17px;white-space:pre;font-weight:bold;color:#e5e5e5"> <span style="background:#2472c8;color:#ffffff;display:inline-block;height:17px"> Server running on port 6097 </span></div>
<div class="a mono" style="left:20px;top:132px;font-size:12.83px;line-height:17px;height:17px;white-space:pre;font-weight:bold;color:#e5e5e5"> <span style="font-weight:normal;color:#cccccc">See</span> http://localhost:6097</div>
<div class="a mono" style="left:20px;top:166px;font-size:12.83px;line-height:17px;height:17px;white-space:pre;font-weight:bold;color:#e5e5e5"><span style="color:#f5f543">&gt; New changes detected. Recompiling...</span></div>
<div class="a mono" style="left:20px;top:183px;font-size:12.83px;line-height:17px;height:17px;white-space:pre;font-weight:bold;color:#e5e5e5">   Compiled in <span style="color:#23d18b">0.41ms</span></div>
<div class="a mono" style="left:20px;top:217px;font-size:12.83px;line-height:17px;height:17px;white-space:pre;font-weight:bold;color:#e5e5e5"><span style="color:#f5f543">&gt; Refreshing your app now. Wait a moment...</span></div>
<div class="a mono" style="left:20px;top:234px;font-size:12.83px;line-height:17px;height:17px;white-space:pre;font-weight:bold;color:#e5e5e5"> <span style="background:#2472c8;color:#ffffff;display:inline-block;height:17px"> Server running on port 6097 </span></div>
<div class="a mono" style="left:20px;top:251px;font-size:12.83px;line-height:17px;height:17px;white-space:pre;font-weight:bold;color:#e5e5e5"> <span style="font-weight:normal;color:#cccccc">See</span> http://localhost:6097</div>
<svg style="left:20px;top:66px" width="11" height="12" viewBox="0 0 11 12"><path d="M1 7.5L3.5 10.5L10 1" stroke="#23d18b" stroke-width="2.2" fill="none" stroke-linecap="round" stroke-linejoin="round"/></svg>
<svg style="left:20px;top:185px" width="11" height="12" viewBox="0 0 11 12"><path d="M1 7.5L3.5 10.5L10 1" stroke="#23d18b" stroke-width="2.2" fill="none" stroke-linecap="round" stroke-linejoin="round"/></svg>
<div class="a" style="left:20px;top:268px;width:8px;height:16px;border:1px solid #cccccc"></div>
</div>
<div id="status" class="a">
<div class="a" style="left:0;top:0px;width:34px;height:21px;background:#0078d4"></div>
<svg style="left:12px;top:4px" width="11" height="13" viewBox="0 0 11 13"><path d="M0.8 4.4L5.4 8.4L0.8 12.5M9.6 1.2L5.4 4.8L9.6 8.7" stroke="#fff" stroke-width="1.2" fill="none"/></svg>
<svg style="left:41px;top:4px" width="12" height="14" viewBox="0 0 12 14"><circle cx="2.5" cy="2.5" r="1.8" stroke="#ccc" stroke-width="1.1" fill="none"/><circle cx="2.5" cy="11.5" r="1.8" stroke="#ccc" stroke-width="1.1" fill="none"/><circle cx="9.5" cy="4.5" r="1.8" stroke="#ccc" stroke-width="1.1" fill="none"/><path d="M2.5 4.3V9.7M9.5 6.3C9.5 9 4 8 2.8 9.8" stroke="#ccc" stroke-width="1.1" fill="none"/></svg>
<div class="a" style="left:57.8px;top:5.4px;font-size:12.3px;line-height:12.3px;color:#cccccc;white-space:nowrap;transform:scaleX(0.9604);transform-origin:0 0;">master*</div>
<svg style="left:104px;top:4px" width="14" height="13" viewBox="0 0 14 13"><path d="M1.5 6A5.5 5.5 0 0 1 11.5 3.5M12.5 7A5.5 5.5 0 0 1 2.5 9.5" stroke="#ccc" stroke-width="1.2" fill="none"/><path d="M12 0.5V4H8.5M2 12.5V9H5.5" stroke="#ccc" stroke-width="1.2" fill="none"/></svg>
<svg style="left:133px;top:3px" width="13" height="15" viewBox="0 0 13 15"><circle cx="3" cy="2.5" r="1.7" stroke="#ccc" stroke-width="1.1" fill="none"/><circle cx="3" cy="12.5" r="1.7" stroke="#ccc" stroke-width="1.1" fill="none"/><circle cx="10" cy="7" r="1.7" stroke="#ccc" stroke-width="1.1" fill="none"/><path d="M3 4.2V10.8M6 1V14M10 8.7C9 11 7 11 6 10" stroke="#ccc" stroke-width="1.1" fill="none"/></svg>
<svg style="left:163px;top:4px" width="14" height="14" viewBox="0 0 14 14"><circle cx="7" cy="7" r="6.2" stroke="#ccc" stroke-width="1.1" fill="none"/><path d="M4.5 4.5L9.5 9.5M9.5 4.5L4.5 9.5" stroke="#ccc" stroke-width="1.1"/></svg>
<div class="a" style="left:179.7px;top:5.4px;font-size:12.3px;line-height:12.3px;color:#cccccc;white-space:nowrap;">0</div>
<svg style="left:190px;top:4px" width="13" height="13" viewBox="0 0 13 13"><path d="M6.5 1L12.3 12H0.7Z" stroke="#ccc" stroke-width="1.1" fill="none" stroke-linejoin="round"/><path d="M6.5 4.5V8.5M6.5 9.8V10.8" stroke="#ccc" stroke-width="1.1"/></svg>
<div class="a" style="left:207.0px;top:5.4px;font-size:12.3px;line-height:12.3px;color:#cccccc;white-space:nowrap;">0</div>
<svg style="left:231px;top:3px" width="13" height="15" viewBox="0 0 13 15"><circle cx="6.5" cy="5" r="1.5" fill="#ccc"/><path d="M6.5 6.5L3.5 14M6.5 6.5L9.5 14M4.5 11.5H8.5M3.3 1.5A5 5 0 0 0 3.3 8.5M9.7 1.5A5 5 0 0 1 9.7 8.5M1.3 0.5A7 7 0 0 0 1.3 9.5M11.7 0.5A7 7 0 0 1 11.7 9.5" stroke="#ccc" stroke-width="1.1" fill="none"/></svg>
<div class="a" style="left:246.7px;top:5.4px;font-size:12.3px;line-height:12.3px;color:#cccccc;white-space:nowrap;">0</div>
<svg style="left:870px;top:3px" width="9" height="15" viewBox="0 0 9 15"><circle cx="4.5" cy="7.5" r="3" stroke="#ccc" stroke-width="1.3" fill="none"/><path d="M4.5 0.5V4.5M4.5 10.5V14.5" stroke="#ccc" stroke-width="1.3"/></svg>
<div class="a" style="left:884.0px;top:5.4px;font-size:12.3px;line-height:12.3px;color:#cccccc;white-space:nowrap;transform:scaleX(0.9616);transform-origin:0 0;">You, 11 hours ago</div>
<div class="a" style="left:995.0px;top:5.4px;font-size:12.3px;line-height:12.3px;color:#cccccc;white-space:nowrap;transform:scaleX(0.9293);transform-origin:0 0;">Ln 51, Col 76</div>
<div class="a" style="left:1078.7px;top:5.4px;font-size:12.3px;line-height:12.3px;color:#cccccc;white-space:nowrap;transform:scaleX(0.8921);transform-origin:0 0;">Spaces: 4</div>
<div class="a" style="left:1143.7px;top:5.4px;font-size:12.3px;line-height:12.3px;color:#cccccc;white-space:nowrap;transform:scaleX(0.8982);transform-origin:0 0;">UTF-8</div>
<div class="a" style="left:1191.0px;top:5.4px;font-size:12.3px;line-height:12.3px;color:#cccccc;white-space:nowrap;transform:scaleX(0.8250);transform-origin:0 0;">CRLF</div>
<div class="a" style="left:1233.5px;top:4.6px;font-size:12px;line-height:12px;color:#cccccc;white-space:nowrap;transform:scaleX(0.9692);transform-origin:0 0;">{ }</div>
<div class="a" style="left:1251.7px;top:5.4px;font-size:12.3px;line-height:12.3px;color:#cccccc;white-space:nowrap;transform:scaleX(0.8789);transform-origin:0 0;">JavaScript JSX</div>
<div class="a" style="left:1339.0px;top:5.4px;font-size:12.3px;line-height:12.3px;color:#cccccc;white-space:nowrap;transform:scaleX(1.0061);transform-origin:0 0;">turnibet/tsconfig.json</div>
<svg style="left:1468px;top:3px" width="16" height="15" viewBox="0 0 16 15"><path d="M3 5C3 2 5.5 1 8 1C10.5 1 13 2 13 5V9C13 12 10.5 14 8 14C5.5 14 3 12 3 9Z M1 7V10M15 7V10 M5.5 7.5V10M10.5 7.5V10" stroke="#ccc" stroke-width="1.2" fill="none"/><path d="M1 1L15 14" stroke="#ccc" stroke-width="1.3"/></svg>
<div class="a" style="left:1491px;top:-1px;width:71.5px;height:22px;background:#7d6400"></div>
<div class="a" style="left:1500.0px;top:5.4px;font-size:12.3px;line-height:12.3px;color:#ffffff;white-space:nowrap;transform:scaleX(0.9721);transform-origin:0 0;">CodiumAI</div>
<svg style="left:1572px;top:3px" width="12" height="14" viewBox="0 0 12 14"><path d="M2 10V6A4 4 0 0 1 10 6V10L11.2 11.3H0.8Z" stroke="#ccc" stroke-width="1.1" fill="none" stroke-linejoin="round"/><path d="M4.5 12.5A1.6 1.6 0 0 0 7.5 12.5" stroke="#ccc" stroke-width="1.1" fill="none"/></svg>
</div>
<div id="task" class="a" style="background:linear-gradient(90deg,#233a45 0%,#22384a 30%,#20334a 60%,#1c2b44 100%)">
<svg style="left:16px;top:11.5px" width="16" height="17" viewBox="0 0 16 17"><path d="M0 2.5L6.6 1.6V8H0Z M7.4 1.5L16 0.3V8H7.4Z M0 8.9H6.6V15.4L0 14.5Z M7.4 8.9H16V16.7L7.4 15.5Z" fill="#ffffff"/></svg>
<div class="a" style="left:48px;top:0;width:287px;height:40px;background:#f0f0f0"></div>
<svg style="left:60px;top:12px" width="17" height="17" viewBox="0 0 17 17"><circle cx="10.5" cy="6.5" r="5.3" stroke="#1a1a1a" stroke-width="1.2" fill="none"/><path d="M6.8 10.2L0.8 16.2" stroke="#1a1a1a" stroke-width="1.3"/></svg>
<div class="a" style="left:88.5px;top:13.3px;font-size:15px;line-height:15px;color:#333333;white-space:nowrap;transform:scaleX(0.9541);transform-origin:0 0;">Type here to search</div>
<svg style="left:270px;top:2px" width="48" height="38" viewBox="0 0 48 38"><defs><linearGradient id="sk" x1="0" y1="0" x2="0" y2="1"><stop offset="0" stop-color="#9fd4f0"/><stop offset="1" stop-color="#3a8cc0"/></linearGradient></defs><path d="M3 11L8 9V38H3Z" fill="#6fa8c8"/><path d="M20 0L21 8L23 16L24 38H15L17 16L19 8Z" fill="url(#sk)"/><path d="M35 9L37 14V38H32V14Z" fill="#6ab09a"/><ellipse cx="20" cy="36" rx="22" ry="5" fill="#bfe0f2" opacity="0.6"/></svg>
<svg style="left:351px;top:13px" width="17" height="15" viewBox="0 0 17 15"><rect x="1.5" y="3" width="11" height="9" stroke="#fff" stroke-width="1.2" fill="none"/><path d="M0 0.8H14M0 14.2H14M15.5 2V5M15.5 7V13" stroke="#fff" stroke-width="1.2"/></svg>
<svg style="left:399px;top:8px" width="24" height="22" viewBox="0 0 24 22"><path d="M1 3C1 2 1.5 1.5 2.5 1.5H9L11 3.5H21.5C22.5 3.5 23 4 23 5V19C23 20 22.5 20.5 21.5 20.5H2.5C1.5 20.5 1 20 1 19Z" fill="#f5c33b"/><path d="M1 7H23V19C23 20 22.5 20.5 21.5 20.5H2.5C1.5 20.5 1 20 1 19Z" fill="#ffd35c"/><rect x="7" y="13" width="10" height="7.5" fill="#2c7bd6"/><rect x="9" y="15" width="6" height="3" fill="#ffd35c"/></svg>
<div class="a" style="left:391px;top:38px;width:31px;height:2px;background:#7fb1d6"></div>
<div class="a" style="left:424px;top:38px;width:6px;height:2px;background:#5a86a6"></div>
<svg style="left:448px;top:8px" width="23" height="24" viewBox="0 0 23 24"><path d="M7 6V4A4.5 4.5 0 0 1 16 4V6" stroke="#2d8ee0" stroke-width="1.6" fill="none"/><rect x="0.5" y="6" width="22" height="17.5" rx="2.5" fill="#f4f4f4"/><rect x="0.5" y="6" width="22" height="3" rx="1" fill="#3aa0ee"/><rect x="7" y="11" width="4" height="4" fill="#f25022"/><rect x="12" y="11" width="4" height="4" fill="#7fba00"/><rect x="7" y="16" width="4" height="4" fill="#00a4ef"/><rect x="12" y="16" width="4" height="4" fill="#ffb900"/></svg>
<svg style="left:497px;top:9px" width="24" height="22" viewBox="0 0 24 22"><path d="M0.5 8L12 0.5L23.5 8V21.5H0.5Z" fill="#0f64b8"/><path d="M3 5H21V14L12 19L3 14Z" fill="#ffffff"/><path d="M0.5 8L12 15L23.5 8V21.5H0.5Z" fill="#2d9be8"/><path d="M0.5 21.5L12 13L23.5 21.5Z" fill="#48b1f4"/></svg>
<svg style="left:547px;top:8px" width="22" height="24" viewBox="0 0 22 24"><ellipse cx="11" cy="12" rx="11" ry="12" fill="#e3141c"/><ellipse cx="11" cy="12" rx="4.5" ry="8.5" fill="#20334a"/></svg>
<svg style="left:595px;top:8px" width="24" height="24" viewBox="0 0 24 24"><circle cx="12" cy="12" r="11.5" fill="#1b8fd8"/><path d="M23.5 12C23.5 6 18.5 0.5 12 0.5C6 0.5 0.5 5.5 0.5 12C3 8 8 7 11 8.5C15 10.5 14 16 10 16C14 19 23.5 18 23.5 12Z" fill="#36c2b4"/><path d="M9 15C5 14 4 9 8 8" fill="#0c5aa6"/><ellipse cx="13.5" cy="13.5" rx="5" ry="3.5" fill="#20334a"/></svg>
<svg style="left:644px;top:8px" width="24" height="24" viewBox="0 0 24 24"><circle cx="12" cy="12" r="11.5" fill="#34a853"/><path d="M12 0.5A11.5 11.5 0 0 1 22 6.3H12A5.7 5.7 0 0 0 7 9.2L2 3.8A11.5 11.5 0 0 1 12 0.5Z" fill="#ea4335"/><path d="M22 6.3A11.5 11.5 0 0 1 12 23.5L17 15A5.7 5.7 0 0 0 17 9Z" fill="#fbbc04"/><circle cx="12" cy="12" r="5.5" fill="#ffffff"/><circle cx="12" cy="12" r="4.3" fill="#4285f4"/></svg>
<div class="a" style="left:681px;top:0;width:48px;height:40px;background:#3e5566"></div>
<div class="a" style="left:681px;top:38px;width:48px;height:2px;background:#8ac0e8"></div>
<svg style="left:692px;top:8px" width="25" height="25" viewBox="0 0 100 100"><path d="M71 2L96 14V86L71 98L30 58L12 72L3 67V33L12 28L30 42Z M71 28L44 50L71 72Z M12 38V62L24 50Z" fill="#2f9bea" fill-rule="evenodd"/><path d="M71 2L96 14V86L71 98Z" fill="#1a75c8"/></svg>
<svg style="left:741px;top:7px" width="25" height="25" viewBox="0 0 25 25"><path d="M1 6L22 2L23 7L2 10Z" fill="#2a8ad8"/><rect x="1" y="9" width="23" height="15" rx="2" fill="#1668bf"/><path d="M9 12L17 16.5L9 21Z" fill="#ffffff"/></svg>
<div class="a" style="left:734px;top:38px;width:40px;height:2px;background:#5a86a6"></div>
<svg style="left:791px;top:8px" width="24" height="24" viewBox="0 0 24 24"><circle cx="12" cy="12" r="11.5" fill="#34a853"/><path d="M12 0.5A11.5 11.5 0 0 1 22 6.3H12A5.7 5.7 0 0 0 7 9.2L2 3.8A11.5 11.5 0 0 1 12 0.5Z" fill="#ea4335"/><path d="M22 6.3A11.5 11.5 0 0 1 12 23.5L17 15A5.7 5.7 0 0 0 17 9Z" fill="#fbbc04"/><circle cx="12" cy="12" r="5.5" fill="#ffffff"/><circle cx="12" cy="12" r="4.3" fill="#4285f4"/></svg>
<div class="a" style="left:800px;top:20px;width:16px;height:16px;border-radius:8px;background:#6a3fbf;color:#fff;font-size:9px;line-height:16px;text-align:center">K</div>
<div class="a" style="left:783px;top:38px;width:39px;height:2px;background:#5a86a6"></div>
<svg style="left:1171px;top:7px" width="26" height="24" viewBox="0 0 26 24"><path d="M14 1A7 7 0 1 0 22 10A6 6 0 0 1 14 1Z" fill="#f6b73c"/><path d="M5 22C1.5 22 0.5 19 2.5 17C3 13 8 12 10 14C11.5 10.5 17.5 10.5 19 15C23 14.5 25.5 17 24.5 20C24 21.5 22.5 22 21 22Z" fill="#dfe8f0"/></svg>
<div class="a" style="left:1203.7px;top:12.7px;font-size:14.5px;line-height:14.5px;color:#ffffff;white-space:nowrap;transform:scaleX(0.8889);transform-origin:0 0;">24°C</div>
<div class="a" style="left:1242.5px;top:12.7px;font-size:14.5px;line-height:14.5px;color:#ffffff;white-space:nowrap;transform:scaleX(0.9734);transform-origin:0 0;">Mostly cloudy</div>
<svg style="left:1352px;top:14px" width="13" height="8" viewBox="0 0 13 8"><path d="M0.8 7L6.5 1L12.2 7" stroke="#fff" stroke-width="1.2" fill="none"/></svg>
<svg style="left:1375px;top:11px" width="17" height="18" viewBox="0 0 17 18"><circle cx="8" cy="8" r="7.3" stroke="#fff" stroke-width="1.1" fill="none"/><ellipse cx="8" cy="8" rx="3.3" ry="7.3" stroke="#fff" stroke-width="1" fill="none"/><path d="M0.7 8H15.3M2 4H14M2 12H10" stroke="#fff" stroke-width="1"/><circle cx="13" cy="14" r="3.5" fill="#1f3045" stroke="#fff" stroke-width="1"/><path d="M10.8 16.2L15.2 11.8" stroke="#fff" stroke-width="1"/></svg>
<svg style="left:1399px;top:12px" width="16" height="15" viewBox="0 0 16 15"><path d="M2 0V4M5 0V4M0.5 4H6.5V7A3 3 0 0 1 3.5 10V14" stroke="#fff" stroke-width="1.1" fill="none"/><rect x="7" y="4.5" width="8.5" height="6" stroke="#fff" stroke-width="1" fill="none"/><path d="M9.5 6L13 9M13 6L9.5 9" stroke="#fff" stroke-width="0.9"/></svg>
<svg style="left:1422px;top:12px" width="17" height="15" viewBox="0 0 17 15"><path d="M1 5H4L8 1.5V13.5L4 10H1Z" stroke="#fff" stroke-width="1.1" fill="none" stroke-linejoin="round"/><path d="M10.5 5A3 3 0 0 1 10.5 10M12.5 3A6 6 0 0 1 12.5 12" stroke="#fff" stroke-width="1.1" fill="none"/><path d="M14.5 1.5A8 8 0 0 1 14.5 13.5" stroke="#8a96a0" stroke-width="1.1" fill="none"/></svg>
<div class="a" style="left:1450.7px;top:4.6px;font-size:12.3px;line-height:12.3px;color:#ffffff;white-space:nowrap;transform:scaleX(0.9236);transform-origin:0 0;">12:39 AM</div>
<div class="a" style="left:1448.7px;top:22.6px;font-size:12.3px;line-height:12.3px;color:#ffffff;white-space:nowrap;transform:scaleX(0.9503);transform-origin:0 0;">8/29/2024</div>
<svg style="left:1518px;top:11px" width="26" height="26" viewBox="0 0 26 26"><path d="M0.7 0.8H17V13.7H8.5L5.5 16.8V13.7H0.7Z" fill="#ffffff"/><path d="M3.5 4.5H13.5M3.5 7.4H13.5M3.5 10.4H9.5" stroke="#1f2f45" stroke-width="1"/><circle cx="16.4" cy="16.5" r="7.6" fill="#2e3036" stroke="#8a8f96" stroke-width="0.9"/><path d="M14.6 14.2L17 12.3V21" stroke="#fff" stroke-width="1.6" fill="none"/></svg>
<svg style="left:1557px;top:10px" width="21" height="21" viewBox="0 0 21 21"><defs><linearGradient id="cpl" x1="0" y1="0" x2="0" y2="1"><stop offset="0" stop-color="#1aa3f5"/><stop offset="0.55" stop-color="#4cc27a"/><stop offset="1" stop-color="#f5d000"/></linearGradient><linearGradient id="cpr" x1="0" y1="0" x2="0" y2="1"><stop offset="0" stop-color="#b45cf0"/><stop offset="1" stop-color="#f0508a"/></linearGradient></defs><path d="M4 1.2C5 0.6 6 0.5 7.5 0.5H12C13.5 0.5 14.3 1.2 15 3L15.8 5.5L9 6C7.8 6.2 7.3 7 7 8.5L5.5 14.5H2.5C1 14.5 0.3 13.5 0.5 12Z" fill="url(#cpl)"/><path d="M10 5.5H18C19.5 5.5 20.3 6.5 20 8L18.5 14.5H9Z" fill="url(#cpr)"/><path d="M9.5 1H13C14 1 14.8 2 15.3 4L16 6H10.5Z" fill="#2c6ee8"/><rect x="5" y="13.8" width="15" height="6" rx="1.3" fill="#ffc400"/><text x="12.5" y="19.2" font-size="5.6" font-weight="bold" font-family="Liberation Sans" fill="#111" text-anchor="middle">PRE</text></svg>
<div class="a" style="left:1595px;top:0;width:1px;height:40px;background:#5a6a78"></div>
</div>
</body></html>
